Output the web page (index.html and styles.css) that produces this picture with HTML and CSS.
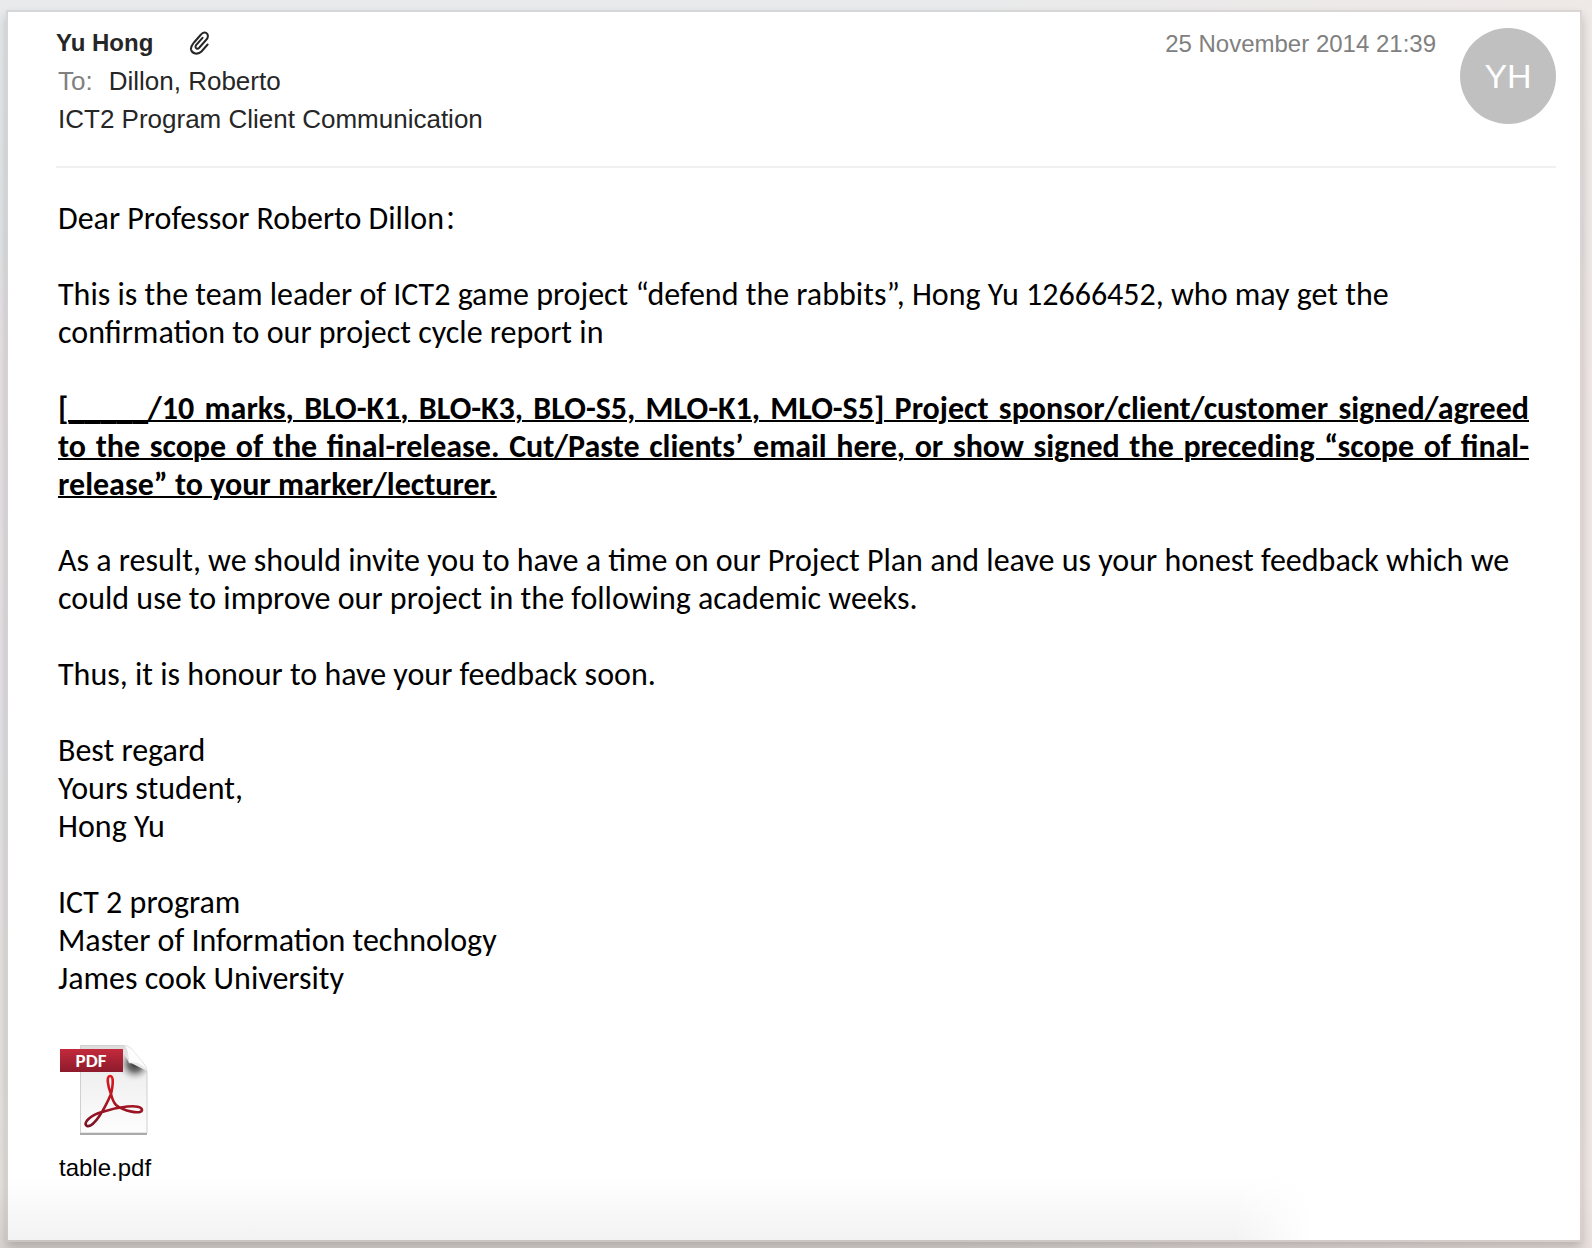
FILE: index.html
```html
<!DOCTYPE html>
<html lang="en">
<head>
<meta charset="utf-8">
<title>ICT2 Program Client Communication</title>
<link rel="stylesheet" href="styles.css">
</head>
<body>
<article class="message">
  <header class="message-header">
    <div class="summary">
      <div class="sender-row">
        <h1 class="sender">Yu Hong</h1>
        <svg class="clip" viewBox="0 0 20 24" role="img" aria-label="Has attachment"><path d="M18.600 13.500 12.500 20.500C9 24 3 23 2 18.500 1.500 15.500 3 14 5 11.500L12 3.500C14 1 17 1 18.300 3 19.700 5.500 18.500 7.500 17 9L10 17C8.500 18.500 6.300 17.500 6.500 15.500 6.600 14.500 7.500 13.800 8 13L13.500 6.800"/></svg>
      </div>
      <p class="line recipient"><span class="label">To:</span><span>Dillon, Roberto</span></p>
      <h2 class="line">ICT2 Program Client Communication</h2>
    </div>
    <time class="date" datetime="2014-11-25T21:39">25 November 2014 21:39</time>
    <div class="avatar">YH</div>
  </header>
  <div class="body">
    <p>Dear Professor Roberto Dillon<span class="wide">：</span></p>
    <p>This is the team leader of ICT2 game project “defend the rabbits”, Hong Yu 12666452, who may get the confirmation to our project cycle report in</p>
    <p class="criteria">[_____/10 marks, BLO-K1, BLO-K3, BLO-S5, MLO-K1, MLO-S5] Project sponsor/client/customer signed/agreed to the scope of the final-release. Cut/Paste clients’ email here, or show signed the preceding “scope of final-release” to your marker/lecturer.</p>
    <p>As a result, we should invite you to have a time on our Project Plan and leave us your honest feedback which we could use to improve our project in the following academic weeks.</p>
    <p>Thus, it is honour to have your feedback soon.</p>
    <p>Best regard<br>Yours student,<br>Hong Yu</p>
    <p>ICT 2 program<br>Master of Information technology<br>James cook University</p>
  </div>
  <a class="attachment" href="table.pdf">
    <svg class="pdf" viewBox="0 0 90 92" aria-hidden="true">
      <defs>
        <linearGradient id="page" x1="0" y1="0" x2="0" y2="1"><stop offset="0" stop-color="#dcdcdc"/><stop offset="0.35" stop-color="#f0f0f0"/><stop offset="1" stop-color="#fdfdfd"/></linearGradient>
        <linearGradient id="band" x1="0" y1="0" x2="0" y2="1"><stop offset="0" stop-color="#c32a3c"/><stop offset="1" stop-color="#8d1a2c"/></linearGradient>
        <radialGradient id="shade" gradientUnits="userSpaceOnUse" cx="76" cy="20" r="18"><stop offset="0" stop-color="#333"/><stop offset="0.4" stop-color="#777"/><stop offset="1" stop-color="#eee" stop-opacity="0"/></radialGradient>
        <linearGradient id="swirl" x1="0" y1="0" x2="0" y2="1"><stop offset="0" stop-color="#e01820"/><stop offset="1" stop-color="#7a1224"/></linearGradient>
      </defs>
      <path d="M21.500 1.500H64q5 0 8 3L85 20q3 4 3 8v61H21.500z" fill="url(#page)" stroke="#d0d0d0"/>
      <path d="M21 90h67" stroke="#aaa" stroke-width="2"/>
      <path d="M62 6l8 12 18 9v12H58V6z" fill="url(#shade)"/>
      <path d="M65 1c4 4 4 11 5 18 8-1 14 2 18 8-1-5-4-9-6-11L74 6q-4-4-9-5z" fill="#fcfcfc" stroke="#ddd" stroke-width=".5"/>
      <path d="M1 5h63v23H1z" fill="url(#band)"/>
      <text x="32" y="23" class="pdf-label">PDF</text>
      <path d="M52 50c-3-7-5-18-1-18s3 9 1 18C46 64 35 84 28 82c-5-3 4-11 15-14 14-5 40-9 40-2 0 5-19 1-26-5-3-3-4-7-5-11" fill="none" stroke="url(#swirl)" stroke-width="2.600"/>
    </svg>
    <span>table.pdf</span>
  </a>
</article>
</body>
</html>
```
FILE: styles.css
```css
* { box-sizing: border-box; }
body {
  margin: 0;
  min-height: 100vh;
  padding: 10px 10px 6px 6px;
  display: flex;
  background:
    linear-gradient(to right, transparent 60%, rgba(242, 232, 228, .6)),
    linear-gradient(#e9eaeb 0%, #e4e5e7 20%, #eae3e6 30%, #e5e4e6 60%, #e8e4e0 95%, #dcd5d2 100%);
  font-family: "Liberation Sans", Arial, sans-serif;
  color: #262626;
}
h1, h2, p { margin: 0; font-weight: 400; }
.message {
  flex: 1;
  background:
    linear-gradient(to right, transparent 78%, #fff 83%),
    linear-gradient(to top, #f3f3f3, #fff 64px);
  background-clip: padding-box;
  border: 2px solid rgba(0, 0, 0, .08);
  padding: 16px 24px 48px 48px;
  box-shadow: 0 6px 10px rgba(0, 0, 0, .2);
}
.message-header {
  display: flex;
  align-items: flex-start;
  border-bottom: 2px solid #f2efef;
  padding-bottom: 28px;
}
.summary { flex: 1; margin-top: -4px; }
.sender-row { display: flex; align-items: center; gap: 36px; }
.sender { font-size: 24px; font-weight: 700; line-height: 38px; }
.clip { width: 20px; height: 24px; fill: none; stroke: #262626; stroke-width: 2; stroke-linecap: round; }
.line { font-size: 26px; line-height: 38px; padding-left: 2px; }
.recipient { display: flex; gap: 16px; }
.label { color: #808080; }
.date { font-size: 24px; line-height: 32px; color: #808080; margin-right: 24px; }
.avatar {
  width: 96px; height: 96px; border-radius: 50%;
  background: #c0c0c0; color: #fff;
  font-size: 34px; line-height: 96px; text-align: center;
}
.body {
  font-family: Carlito, Calibri, Lato, sans-serif;
  font-size: 32px; line-height: 38px; color: #000;
  padding: 32px 27px 0 2px;
  display: flex; flex-direction: column; gap: 38px;
}
.wide { font-family: "Noto Sans CJK SC", sans-serif; font-size: 26px; line-height: 1; }
.criteria { font-weight: 700; text-align: justify; text-decoration: underline 2px; }
.attachment {
  display: inline-flex; flex-direction: column; gap: 16px;
  margin-top: 46px; padding-left: 3px;
  color: #000; font-size: 24px; line-height: 32px; text-decoration: none;
}
.pdf { width: 90px; height: 92px; }
.pdf-label { font: 700 19px Carlito, Lato, sans-serif; fill: #fff; text-anchor: middle; }
```
